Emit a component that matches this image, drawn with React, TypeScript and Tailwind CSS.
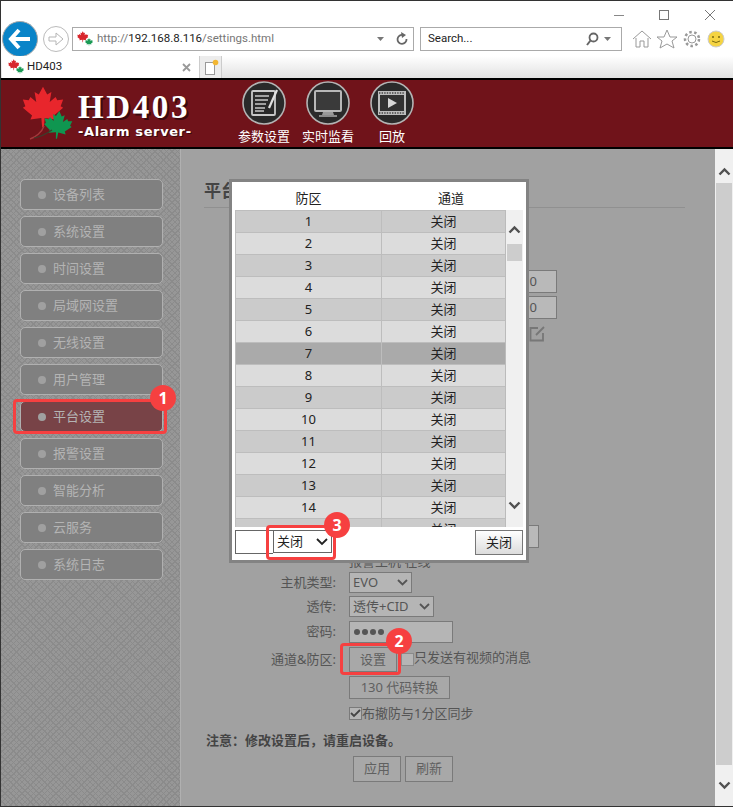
import React from "react";

const CJK = "font-['Noto_Sans','Noto_Sans_CJK_SC',sans-serif]";
const MAPLE = "50,2 60,20 70,14 66,38 80,26 84,34 98,32 92,48 98,52 76,70 80,80 54,76 52,98 48,98 46,76 20,80 24,70 2,52 8,48 2,32 16,34 20,26 34,38 30,14 40,20";

function Favicon() {
  return (
    <svg width="16" height="16" viewBox="0 0 16 16" className="shrink-0">
      <polygon points={MAPLE} transform="translate(0,0) scale(0.115)" fill="#d8262c" />
      <polygon points={MAPLE} transform="translate(8,7) scale(0.08)" fill="#1b9a55" />
    </svg>
  );
}

function Chevron({ up, className = "" }: { up?: boolean; className?: string }) {
  return (
    <svg width="13" height="9" viewBox="0 0 13 9" className={className}>
      <path d={up ? "M1.5 7.5 L6.5 2.5 L11.5 7.5" : "M1.5 1.5 L6.5 6.5 L11.5 1.5"} fill="none" stroke="#505050" strokeWidth="2.4" />
    </svg>
  );
}

function Logo() {
  return (
    <svg width="56" height="56" viewBox="0 0 56 56" className="shrink-0">
      <polygon points={MAPLE} transform="translate(0,0) scale(0.42)" fill="#e8262c" />
      <polygon points={MAPLE} transform="translate(23,23) rotate(6) scale(0.29)" fill="#0f9650" />
      <path d="M22 40 C20 46 14 51 8 53" stroke="#a3393c" strokeWidth="1.4" fill="none" />
      <path d="M30 44 C24 48 18 51 12 52" stroke="#3d3d2c" strokeWidth="1.2" fill="none" />
    </svg>
  );
}

function NavIcon({ kind }: { kind: "edit" | "monitor" | "play" }) {
  return (
    <svg width="44" height="44" viewBox="0 0 44 44">
      <circle cx="22" cy="22" r="21" fill="#2a2a2a" stroke="#b4b4b4" strokeWidth="1.6" />
      {kind === "edit" && (
        <g>
          <rect x="10" y="10" width="23" height="24" rx="1" fill="none" stroke="#c8c8c8" strokeWidth="1.8" />
          <path d="M13 15h14M13 19h13M13 23h11M13 27h10M13 30h9" stroke="#c8c8c8" strokeWidth="1.6" />
          <path d="M27 27 L35 9" stroke="#e0e0e0" strokeWidth="2.2" />
        </g>
      )}
      {kind === "monitor" && (
        <g>
          <rect x="9" y="10" width="26" height="20" rx="1" fill="#3a3a3a" stroke="#b8b8b8" strokeWidth="2" />
          <path d="M17 31 L16 34 H28 L27 31 Z" fill="#9a9a9a" />
          <path d="M13 35h18" stroke="#b8b8b8" strokeWidth="1.4" />
        </g>
      )}
      {kind === "play" && (
        <g>
          <rect x="8" y="10" width="28" height="24" fill="#bdbdbd" />
          <rect x="10" y="14" width="24" height="16" fill="#333" />
          <path d="M9 12h26M9 32h26" stroke="#444" strokeWidth="1.4" strokeDasharray="1.4 1.2" />
          <polygon points="18,17 18,27 27,22" fill="#d8d8d8" />
        </g>
      )}
    </svg>
  );
}

function NavItem({ kind, label }: { kind: "edit" | "monitor" | "play"; label: string }) {
  return (
    <div className="flex w-[64px] flex-col items-center">
      <NavIcon kind={kind} />
      <span className="mt-[1px] text-[13px] leading-[20px] text-white">{label}</span>
    </div>
  );
}

function Chrome() {
  return (
    <div className="h-[78px] shrink-0 border-t border-t-[#333] bg-white font-['Roboto','Noto_Sans_CJK_SC',sans-serif]">
      <div className="flex h-[20px] items-start justify-end">
        <svg width="120" height="20" viewBox="0 0 120 20" className="mr-[8px]">
          <path d="M9 14.5h10" stroke="#888" />
          <rect x="54.500" y="9.500" width="9" height="9" fill="none" stroke="#777" />
          <path d="M100 9l10 10M110 9l-10 10" stroke="#777" />
        </svg>
      </div>
      <div className="flex h-[35px] items-center pl-[2px]">
        <div className="flex h-[36px] w-[36px] items-center justify-center rounded-full border border-[#aaa] bg-[#0a84c8]">
          <svg width="24" height="22" viewBox="0 0 24 22">
            <path d="M11 2 L3 11 L11 20 M4 11 H22" fill="none" stroke="#fff" strokeWidth="4" />
          </svg>
        </div>
        <div className="ml-[5px] flex h-[26px] w-[26px] items-center justify-center rounded-full border border-[#bbb] bg-white">
          <svg width="16" height="14" viewBox="0 0 16 14">
            <path d="M1 5h7V1l7 6-7 6V9H1z" fill="none" stroke="#b5b5b5" />
          </svg>
        </div>
        <div className="ml-[3px] flex h-[24px] w-[342px] items-center border border-[#aaa] pl-[4px] pr-[4px]">
          <Favicon />
          <span className="ml-[4px] mt-[1px] text-[11.5px] text-[#777]">
            http://<span className="text-[#222]">192.168.8.116</span>/settings.html
          </span>
          <svg width="32" height="14" viewBox="0 0 32 14" className="ml-auto">
            <path d="M0 5h7l-3.500 4z" fill="#777" />
            <path d="M26 3a4.500 4.500 0 1 0 3.500 4" fill="none" stroke="#666" strokeWidth="1.800" />
            <path d="M24 0l5 3-4 3z" fill="#666" />
          </svg>
        </div>
        <div className="ml-[6px] flex h-[24px] w-[202px] items-center border border-[#aaa] pl-[7px] pr-[9px]">
          <span className="mt-[1px] text-[11.5px] text-[#222]">Search...</span>
          <svg width="26" height="14" viewBox="0 0 26 14" className="ml-auto">
            <circle cx="7.500" cy="5.500" r="4" fill="none" stroke="#666" strokeWidth="1.800" />
            <path d="M4.500 8.500 L1 13" stroke="#666" strokeWidth="2" />
            <path d="M18 5h7l-3.500 4z" fill="#777" />
          </svg>
        </div>
        <svg width="96" height="20" viewBox="0 0 96 20" className="ml-[10px]">
          <path d="M1 10 L10 2 L19 10 M4 9 V18 H8 V12 H12 V18 H16 V9" fill="none" stroke="#999" />
          <polygon points="35,1 38,8 45,8 40,12 42,19 35,15 28,19 30,12 25,8 32,8" fill="none" stroke="#999" />
          <circle cx="60" cy="10" r="4" fill="none" stroke="#999" />
          <circle cx="60" cy="10" r="7" fill="none" stroke="#999" strokeWidth="2.500" strokeDasharray="2.500 2.500" />
          <circle cx="84" cy="10" r="8" fill="#f5d443" stroke="#ccc" />
          <circle cx="81" cy="8" r="1" fill="#7a6a10" />
          <circle cx="87" cy="8" r="1" fill="#7a6a10" />
          <path d="M80 12q4 3 8 0" fill="none" stroke="#7a6a10" />
        </svg>
      </div>
      <div className="flex h-[22px] bg-gradient-to-b from-white to-[#e2e2e2] pl-[2px]">
        <div className="flex w-[198px] items-center border-r border-r-[#ccc] bg-white pl-[6px] pr-[8px]">
          <Favicon />
          <span className="ml-[3px] text-[11.5px] text-[#222]">HD403</span>
          <svg width="9" height="9" viewBox="0 0 9 9" className="ml-auto">
            <path d="M1 1l7 7M8 1l-7 7" stroke="#999" strokeWidth="1.800" />
          </svg>
        </div>
        <div className="flex w-[22px] items-center justify-center border-r border-r-[#ccc] bg-[#ececec]">
          <svg width="16" height="16" viewBox="0 0 16 16">
            <rect x="2.500" y="3.500" width="9" height="12" fill="#fff" stroke="#999" />
            <circle cx="12.500" cy="3.500" r="2.800" fill="#f2b632" />
          </svg>
        </div>
      </div>
    </div>
  );
}

function Header() {
  return (
    <div className="flex h-[71px] shrink-0 items-center border-y-[2px] border-y-black bg-[#70131a] pl-[22px]">
      <Logo />
      <div className="w-[154px] pt-[4px] text-white">
        <div className="font-['Liberation_Serif',serif] text-[33px] font-bold leading-[31px] tracking-[2.6px] [text-shadow:2px_2px_0_#3a0a0e]">HD403</div>
        <div className="mt-[1px] font-['DejaVu_Sans',sans-serif] text-[13px] font-bold leading-[15px] tracking-[0.6px] [text-shadow:1px_1px_0_#3a0a0e]">-Alarm server-</div>
      </div>
      <NavItem kind="edit" label="参数设置" />
      <NavItem kind="monitor" label="实时监看" />
      <NavItem kind="play" label="回放" />
    </div>
  );
}

const menu = ["设备列表", "系统设置", "时间设置", "局域网设置", "无线设置", "用户管理", "平台设置", "报警设置", "智能分析", "云服务", "系统日志"];

function Sidebar() {
  return (
    <div className="flex w-[181px] shrink-0 flex-col gap-[6px] border-r border-r-[#b0b0b0] bg-[#979797] bg-[repeating-linear-gradient(45deg,#8b8b8b_0,#8b8b8b_1px,transparent_1px,transparent_4px),repeating-linear-gradient(-45deg,#8b8b8b_0,#8b8b8b_1px,transparent_1px,transparent_4px)] pl-[20px] pt-[30px]">
      {menu.map((m) => (
        <div key={m} className={`flex h-[31px] w-[143px] items-center rounded-[5px] border border-[#b0b0b0] pl-[17px] pt-[1px] text-[13px] text-[#b4b4b4] ${m === "平台设置" ? "bg-[#784347]" : "bg-[#808080]"}`}>
          <span className="h-[8px] w-[8px] rounded-full bg-[#a0a0a0]" />
          <span className="ml-[7px]">{m}</span>
        </div>
      ))}
    </div>
  );
}

function Label({ children }: { children?: React.ReactNode }) {
  return <div className="w-[159px] shrink-0 pr-[4px] text-right">{children}</div>;
}

function DimSelect({ text, width }: { text: string; width: string }) {
  return (
    <div className={`flex h-[21px] items-center justify-between border border-[#7a7a7a] bg-[#b5b5b5] pl-[3px] pr-[3px] ${width}`}>
      <span>{text}</span>
      <svg width="11" height="7" viewBox="0 0 11 7"><path d="M1 1l4.500 4.500L10 1" fill="none" stroke="#555" strokeWidth="1.800" /></svg>
    </div>
  );
}

function DimButton({ children, className = "" }: { children: React.ReactNode; className?: string }) {
  return <div className={`flex items-center justify-center border border-[#7a7a7a] bg-[#a8a8a8] text-[#606060] ${className}`}>{children}</div>;
}

function Content() {
  return (
    <div className="min-w-0 flex-1 bg-[#a1a1a1] text-[13px] text-[#555]">
      <div className="ml-[23px] mr-[30px] mt-[31px] h-[28px] border-b border-b-[#909090] text-[17px] font-bold leading-[22px] text-[#444]">平台设置</div>
      <div className="mt-[62px] flex flex-col">
        <div className="flex h-[23px] items-center">
          <Label />
          <div className="ml-[9px] flex h-[23px] w-[208px] items-center justify-end border border-[#7a7a7a] bg-[#b9b9b9] pr-[19px]">0</div>
        </div>
        <div className="mt-[3px] flex h-[23px] items-center">
          <Label />
          <div className="ml-[9px] flex h-[23px] w-[208px] items-center justify-end border border-[#7a7a7a] bg-[#b9b9b9] pr-[19px]">0</div>
        </div>
        <div className="mt-[7px] flex h-[15px] justify-end pr-[170px]">
          <svg width="16" height="16" viewBox="0 0 16 16">
            <path d="M9 2H1.500v12.500H14V7M7 9 L15 1" fill="none" stroke="#777" strokeWidth="1.800" />
          </svg>
        </div>
        <div className="mt-[184px] flex h-[23px] items-center">
          <Label />
          <div className="ml-[9px] h-[23px] w-[190px] border border-[#7a7a7a] bg-[#b9b9b9]" />
        </div>
        <div className="flex h-[24px] items-center pt-[4px]">
          <Label />
          <div className="ml-[9px]">报警主机 在线</div>
        </div>
        <div className="flex h-[21px] items-center">
          <Label>主机类型:</Label>
          <div className="ml-[9px]"><DimSelect text="EVO" width="w-[63px]" /></div>
        </div>
        <div className="mt-[3px] flex h-[21px] items-center">
          <Label>透传:</Label>
          <div className="ml-[9px]"><DimSelect text="透传+CID" width="w-[85px]" /></div>
        </div>
        <div className="mt-[4px] flex h-[22px] items-center">
          <Label>密码:</Label>
          <div className="ml-[9px] flex h-[22px] w-[104px] items-center gap-[2px] border border-[#7a7a7a] bg-[#b5b5b5] pl-[4px]">
            <span className="h-[6px] w-[6px] rounded-full bg-[#555]" />
            <span className="h-[6px] w-[6px] rounded-full bg-[#555]" />
            <span className="h-[6px] w-[6px] rounded-full bg-[#555]" />
            <span className="h-[6px] w-[6px] rounded-full bg-[#555]" />
          </div>
        </div>
        <div className="mt-[4px] flex h-[25px] items-center">
          <Label>通道&防区:</Label>
          <DimButton className="ml-[9px] h-[25px] w-[48px]">设置</DimButton>
          <div className="ml-[4px] h-[13px] w-[13px] border border-[#8a8a8a] bg-[#b5b5b5]" />
          <span className="-mt-[3px]">只发送有视频的消息</span>
        </div>
        <div className="mt-[4px] flex h-[23px] items-center">
          <Label />
          <DimButton className="ml-[9px] h-[23px] w-[101px]">130 代码转换</DimButton>
        </div>
        <div className="mt-[8px] flex h-[13px] items-center">
          <Label />
          <div className="ml-[9px] flex h-[13px] w-[13px] items-center justify-center border border-[#7a7a7a] bg-[#b5b5b5]">
            <svg width="11" height="9" viewBox="0 0 11 9"><path d="M1 4l3 3 6-6" fill="none" stroke="#444" strokeWidth="1.800" /></svg>
          </div>
          <span>布撤防与1分区同步</span>
        </div>
        <div className="ml-[25px] mt-[10px] h-[20px] font-bold leading-[20px] text-[#444]">{"注意\uFF1A修改设置后\uFF0C请重启设备。"}</div>
        <div className="ml-[172px] mt-[6px] flex gap-[4px]">
          <DimButton className="h-[26px] w-[48px]">应用</DimButton>
          <DimButton className="h-[26px] w-[48px]">刷新</DimButton>
        </div>
      </div>
    </div>
  );
}

function PageScrollbar() {
  return (
    <div className="flex w-[18px] shrink-0 flex-col bg-[#f0f0f0]">
      <div className="flex h-[34px] justify-center pt-[18px]"><Chevron up /></div>
      <div className="ml-[1px] mr-[1px] h-[582px] bg-[#cdcdcd]" />
      <div className="flex flex-1 items-center justify-center"><Chevron /></div>
    </div>
  );
}

function Modal() {
  const rows = Array.from({ length: 15 }, (_, i) => i + 1);
  return (
    <div className="absolute left-[229px] top-[179px] h-[384px] w-[300px] border-[3px] border-[#838383] bg-white text-[13px] text-[#222]">
      <div className="flex h-[28px] pl-[3px] pt-[5px] leading-[22px]">
        <div className="w-[147px] text-center">防区</div>
        <div className="w-[138px] text-center">通道</div>
      </div>
      <div className="ml-[3px] flex h-[317px] w-[288px] overflow-hidden bg-[#f0f0f0]">
        <div className="h-[317px] w-[271px] shrink-0 overflow-hidden border-r border-r-[#bbb]">
          {rows.map((r) => (
            <div key={r} className={`-mb-px flex h-[23px] border-y border-y-[#bdbdbd] leading-[20px] ${r === 7 ? "bg-[#aaaaaa]" : r % 2 ? "bg-[#cbcbcb]" : "bg-[#dcdcdc]"}`}>
              <div className="w-[147px] border-x border-x-[#bdbdbd] text-center">{r}</div>
              <div className="flex-1 text-center">关闭</div>
            </div>
          ))}
        </div>
        <div className="flex flex-1 flex-col items-center pt-[15px]">
          <Chevron up />
          <div className="mt-[10px] h-[17px] w-[15px] bg-[#cdcdcd]" />
          <Chevron className="mt-[240px]" />
        </div>
      </div>
      <div className="ml-[3px] mt-[3px] flex items-start">
        <div className="h-[24px] w-[38px] border border-r-0 border-[#666] bg-white" />
        <div className="flex h-[23px] w-[59px] items-center justify-between border border-[#666] pl-[3px] pr-[3px]">
          <span>关闭</span>
          <svg width="12" height="8" viewBox="0 0 12 8"><path d="M1 1l5 5 5-5" fill="none" stroke="#222" strokeWidth="1.800" /></svg>
        </div>
        <div className="ml-auto mr-[3px] flex h-[25px] w-[48px] items-center justify-center border border-[#777] bg-gradient-to-b from-white to-[#dcdcdc]">关闭</div>
      </div>
    </div>
  );
}

function Callout({ n, box, dot }: { n: number; box: string; dot: string }) {
  return (
    <>
      <div className={`absolute rounded-[4px] border-[3px] border-[#f64040] ${box}`} />
      <div className={`absolute flex h-[26px] w-[26px] items-center justify-center rounded-full bg-[#f64040] text-[16px] font-bold text-white ${dot}`}>{n}</div>
    </>
  );
}

export default function App() {
  return (
    <div className={`relative flex h-[807px] w-[733px] flex-col overflow-hidden border-b border-b-[#333] bg-white ${CJK}`}>
      <Chrome />
      <Header />
      <div className="flex min-h-0 flex-1">
        <Sidebar />
        <Content />
        <PageScrollbar />
      </div>
      <Modal />
      <Callout n={1} box="left-[13px] top-[399px] h-[35px] w-[154px]" dot="left-[150px] top-[385px]" />
      <Callout n={2} box="left-[340px] top-[643px] h-[32px] w-[61px]" dot="left-[386px] top-[628px]" />
      <Callout n={3} box="left-[266px] top-[525px] h-[35px] w-[70px]" dot="left-[324px] top-[512px]" />
      <div className="absolute left-0 top-0 h-full w-px bg-[#333]" />
    </div>
  );
}
